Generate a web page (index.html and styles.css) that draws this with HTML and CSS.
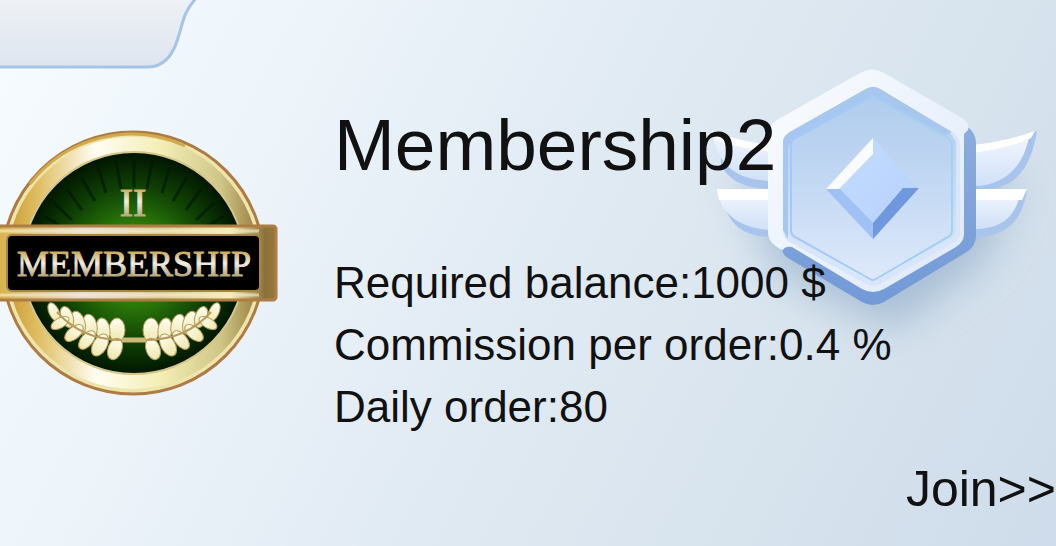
FILE: index.html
```html
<!DOCTYPE html>
<html lang="en">
<head>
<meta charset="utf-8">
<title>Membership2</title>
<meta name="viewport" content="width=device-width, initial-scale=1">
<link rel="stylesheet" href="styles.css">
</head>
<body>
<main class="card">
  <svg class="tab" width="200" height="72" viewBox="0 0 200 72" aria-hidden="true">
    <defs><linearGradient id="tabFill" x1="0" y1="0" x2="0" y2="1"><stop offset="0" stop-color="#eff2f6"/><stop offset="1" stop-color="#dee5ef"/></linearGradient></defs>
    <path d="M-4 -4H198C182 13 183 24 178 38C173 55 164 67 148 67H-4Z" fill="url(#tabFill)" stroke="#a5c4e8" stroke-width="3"/>
  </svg>

  <svg class="emblem" width="340" height="280" viewBox="706 50 340 280" aria-hidden="true">
    <defs>
      <linearGradient id="wing" x1="0" y1="0" x2="0" y2="1"><stop offset="0" stop-color="#f4f8ff"/><stop offset="1" stop-color="#d0e0f7"/></linearGradient>
      <linearGradient id="rim" x1="0" y1="0" x2="1" y2="1"><stop offset="0" stop-color="#fbfdff"/><stop offset="1" stop-color="#dce8fb"/></linearGradient>
      <linearGradient id="face" x1="0" y1="0" x2="0" y2="1"><stop offset="0" stop-color="#aecbec"/><stop offset=".5" stop-color="#c3d8f3"/><stop offset="1" stop-color="#dfeafb"/></linearGradient>
      <linearGradient id="line" x1="0" y1="0" x2="1" y2="0"><stop offset="0" stop-color="#a3c7ff"/><stop offset="1" stop-color="#9fd3ef"/></linearGradient>
      <linearGradient id="edge" x1="0" y1="0" x2="0" y2="1"><stop offset="0" stop-color="#91b1df"/><stop offset="1" stop-color="#739ad7"/></linearGradient>
      <linearGradient id="gem" x1="0" y1="0" x2="1" y2="1"><stop offset="0" stop-color="#c5dcff"/><stop offset="1" stop-color="#b5d1fb"/></linearGradient>
      <filter id="soft" x="-40%" y="-40%" width="180%" height="180%"><feGaussianBlur stdDeviation="20"/></filter>
    </defs>
    <path d="M735 180H1020L985 260L895 330L780 275Z" fill="#8fabc8" opacity=".65" filter="url(#soft)"/>
    <path d="M721 165C729 181 745 189 774 189V145H721Z" fill="#a9c4ec"/>
    <path d="M712 131C717 161 731 181 774 181V145Q740 142 712 131Z" fill="url(#wing)"/>
    <path d="M712 131Q740 142 774 145V152Q738 149 714 138Z" fill="#fff"/>
    <path d="M724 205C732 228 746 237 774 237V190H724Z" fill="#a9c4ec"/>
    <path d="M717 189C720 214 741 230 774 230V189Z" fill="url(#wing)"/>
    <path d="M717 189H774V200H719Z" fill="#fff"/>
    <path d="M972 145Q1008 142 1037 131C1032 163 1018 188 987 189H972Z" fill="#a9c4ec"/>
    <path d="M972 145Q1005 142 1030 133C1025 160 1012 182 980 186H972Z" fill="url(#wing)"/>
    <path d="M972 145Q1005 142 1035 131L1031 138Q1005 149 972 153Z" fill="#fff"/>
    <path d="M972 190H1027C1022 222 1006 237 972 237Z" fill="#a9c4ec"/>
    <path d="M972 189H1022C1015 218 1002 229 972 229Z" fill="url(#wing)"/>
    <path d="M972 189H1027L1022 200H972Z" fill="#fff"/>
    <path d="M864 80Q874 75 884 80L965 125Q976 132 976 143V236Q976 247 965 253L884 302Q873 308 862 302L788 258Q782 255 782 247V135Z" fill="url(#edge)"/>
    <path d="M860 73Q872 66 884 73L962 118Q970 123 968 130L964 134V234Q964 242 956 247L884 289Q873 295 862 289L792 247Q785 246 783 250Q768 244 768 232V137Q768 126 777 120Z" fill="url(#rim)"/>
    <path d="M866 89Q873 85 880 89L952 132Q960 137 960 146V231Q960 239 953 243L880 284Q873 288 866 284L791 243Q783 239 783 231V143Q783 136 790 132Z" fill="#d9e6fa"/>
    <path d="M866 89Q873 85 880 89L949 131L956 142V230Q955 237 949 240L880 279Q873 283 866 279L794 240Q786 236 786 229L783 231V143Q783 136 790 132Z" fill="url(#face)"/>
    <path d="M866 89Q873 85 880 89L952 132L945 135L873 95L794 140Q788 144 788 151V239L783 230V143Q783 136 790 132Z" fill="#a8c7ef"/>
    <path d="M870 98Q873 96 876 98L948 138Q952 141 952 146V230Q952 235 948 237L876 279Q873 281 870 279L795 237Q791 235 791 230V146Q791 141 795 138Z" fill="none" stroke="url(#line)" stroke-width="2"/>
    <path d="M873 138L919 189L873 239L826 189Z" fill="url(#gem)"/>
    <path d="M873 138V154L839 189H826Z" fill="#f8fbff"/>
    <path d="M826 189H840L873 223V239Z" fill="#9fc1f5"/>
    <path d="M919 188H903L873 223V239Z" fill="#6f98df"/>
  </svg>

  <svg class="medal" width="278" height="268" viewBox="0 131 278 268" role="img" aria-label="Membership II medal">
    <defs>
      <linearGradient id="gold" x1="0" y1="0" x2="1" y2="0"><stop offset="0" stop-color="#c99b36"/><stop offset=".12" stop-color="#dfbd60"/><stop offset=".35" stop-color="#fffdf2"/><stop offset=".62" stop-color="#f3edb4"/><stop offset=".85" stop-color="#cfc586"/><stop offset="1" stop-color="#997c3e"/></linearGradient>
      <linearGradient id="bar" x1="0" y1="0" x2="1" y2="0"><stop offset="0" stop-color="#d8ad3f"/><stop offset=".33" stop-color="#e4dfd7"/><stop offset=".6" stop-color="#d9d09a"/><stop offset=".84" stop-color="#f3edb4"/><stop offset=".96" stop-color="#8d713a"/><stop offset="1" stop-color="#97793d"/></linearGradient>
      <radialGradient id="green" gradientUnits="userSpaceOnUse" cx="134" cy="265" r="112"><stop offset="0" stop-color="#49a313"/><stop offset=".35" stop-color="#2d7c0a"/><stop offset=".68" stop-color="#104304"/><stop offset="1" stop-color="#001400"/></radialGradient>
      <linearGradient id="letters" x1="0" y1="0" x2="0" y2="1"><stop offset=".2" stop-color="#c9aa5b"/><stop offset=".48" stop-color="#f2efe4"/><stop offset=".85" stop-color="#ab9c6c"/></linearGradient>
      <linearGradient id="leafFill" x1="0" y1="0" x2="0" y2="1"><stop offset="0" stop-color="#fffef2"/><stop offset="1" stop-color="#f0e6ac"/></linearGradient>
      <g id="branch">
        <g fill="url(#leafFill)" stroke="#b39c5c" stroke-width="1">
          <ellipse cx="117" cy="331" rx="8" ry="12"/><ellipse cx="103" cy="331" rx="7" ry="12" transform="rotate(-8 103 331)"/><ellipse cx="90" cy="327" rx="7" ry="12" transform="rotate(-12 90 327)"/><ellipse cx="78" cy="324" rx="7" ry="12" transform="rotate(-17 78 324)"/><ellipse cx="67" cy="318" rx="6" ry="11" transform="rotate(-20 67 318)"/><ellipse cx="54" cy="313" rx="5" ry="10" transform="rotate(-25 54 313)"/>
          <ellipse cx="115" cy="350" rx="7" ry="11" transform="rotate(20 115 350)"/><ellipse cx="100" cy="346" rx="7" ry="12" transform="rotate(30 100 346)"/><ellipse cx="87" cy="341" rx="6" ry="11" transform="rotate(40 87 341)"/><ellipse cx="74" cy="334" rx="6" ry="11" transform="rotate(50 74 334)"/><ellipse cx="60" cy="324" rx="5" ry="10" transform="rotate(60 60 324)"/>
        </g>
        <path d="M122 341Q82 341 57 313" fill="none" stroke="#b99b5b" stroke-width="2"/>
      </g>
    </defs>
    <circle cx="133" cy="264" r="131" fill="#eee5ad" stroke="#ad7b43" stroke-width="3"/>
    <circle cx="133" cy="264" r="126" fill="url(#gold)"/>
    <path d="M30 185A128 128 0 0 1 185 147" fill="none" stroke="#d2aa4a" stroke-width="3"/>
    <circle cx="134" cy="264" r="111" fill="url(#green)" stroke="#d5c68b" stroke-width="2"/>
    <g stroke="#001600" stroke-width="3" opacity=".6">
      <path d="M134 160V188M116 162L121 190M98 168L106 194M81 178L95 202M67 190L82 211M54 204L72 221M44 217L65 230M152 162L147 190M170 168L162 194M187 178L173 202M201 190L186 211M214 204L196 221M224 217L203 230"/>
    </g>
    <path d="M116 341H150" stroke="#c8b978" stroke-width="5"/>
    <use href="#branch"/>
    <use href="#branch" transform="translate(268 0) scale(-1 1)"/>
    <text class="numeral" x="133" y="217" text-anchor="middle" fill="url(#letters)" stroke="url(#letters)">II</text>
    <rect x="-10" y="227" width="286" height="74" rx="3" fill="url(#bar)" stroke="#ae7d43" stroke-width="3"/>
    <path d="M-4 232H259M-4 296H259" stroke="#f3edc8" stroke-width="3" opacity=".65"/>
    <rect x="7" y="236" width="253" height="56" rx="5" fill="#000" stroke="#a8873c" stroke-width="2"/>
    <text class="medal-name" x="134" y="277" text-anchor="middle" fill="url(#letters)" stroke="url(#letters)">MEMBERSHIP</text>
  </svg>

  <section class="details">
    <h1 class="title">Membership2</h1>
    <ul class="facts">
      <li>Required balance:1000 $</li>
      <li>Commission per order:0.4 %</li>
      <li>Daily order:80</li>
    </ul>
    <a class="join" href="#join">Join&gt;&gt;</a>
  </section>
</main>
</body>
</html>
```
FILE: styles.css
```css
* {
  box-sizing: border-box;
}

body {
  margin: 0;
  font-family: "Liberation Sans", Arial, sans-serif;
  color: #111;
}

.card {
  position: relative;
  display: flex;
  align-items: flex-start;
  gap: 56px;
  min-height: 100vh;
  padding: 103px 0 26px;
  overflow: hidden;
  background: linear-gradient(118deg, #f6fcff 0%, #edf4fa 25%, #e0eaf3 52%, #d7e3ed 76%, #cedceb 100%);
}

.tab {
  position: absolute;
  top: 0;
  left: 0;
}

.emblem {
  position: absolute;
  top: 50px;
  right: 10px;
  overflow: visible;
}

.medal {
  flex: none;
  margin-top: 27px;
}

.numeral,
.medal-name {
  font-family: "Liberation Serif", serif;
  font-size: 36px;
}

.numeral {
  font-size: 40px;
}

.details {
  position: relative;
  display: flex;
  flex: 1;
  flex-direction: column;
  min-width: 0;
}

.title {
  margin: 0 0 65px;
  font-size: 73px;
  font-weight: 400;
  line-height: 84px;
}

.facts {
  margin: 0 0 20px;
  padding: 0;
  list-style: none;
  font-size: 44px;
  line-height: 62px;
}

.join {
  align-self: flex-end;
  font-size: 50px;
  line-height: 62px;
  color: inherit;
  text-decoration: none;
}
```
